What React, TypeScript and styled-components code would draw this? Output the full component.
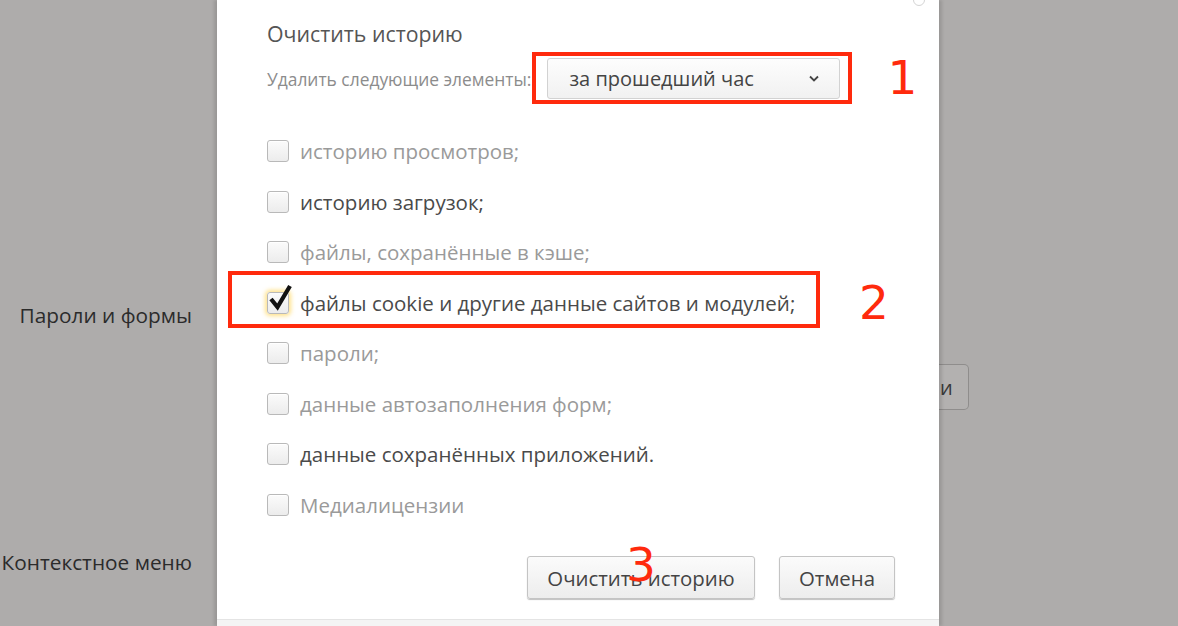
import React from 'react';
import styled, { createGlobalStyle } from 'styled-components';

const GlobalStyle = createGlobalStyle`
  html, body {
    margin: 0;
    padding: 0;
    background: #aeacab;
  }
  * {
    box-sizing: border-box;
  }
`;

const Page = styled.div`
  display: flex;
  width: 1178px;
  height: 626px;
  overflow: hidden;
  background: #aeacab;
  font-family: 'Open Sans', 'Noto Sans', sans-serif;
`;

const SideColumn = styled.div`
  width: 217px;
  flex-shrink: 0;
  display: flex;
  flex-direction: column;
  align-items: flex-end;
  padding: 301px 25px 0 0;
  gap: 219px;
`;

const SideLabel = styled.div`
  font-size: 20.8px;
  line-height: 28px;
  color: #2b2b2b;
  white-space: nowrap;
`;

const RightColumn = styled.div`
  flex: 1;
  padding-top: 364px;
`;

const GhostButton = styled.div`
  width: 30px;
  height: 46px;
  border: 1px solid #8f8d8c;
  border-left: none;
  border-radius: 0 5px 5px 0;
  background: #b3b1b0;
  display: flex;
  align-items: center;
  font-size: 20px;
  color: #3a3a3a;
  padding-left: 1px;
`;

const Dialog = styled.div`
  position: relative;
  width: 722px;
  flex-shrink: 0;
  display: flex;
  flex-direction: column;
  background: #fff;
  box-shadow: -3px 0 3px rgba(0, 0, 0, 0.12), 3px 0 3px rgba(0, 0, 0, 0.12);
`;

const CloseIcon = styled.div`
  position: absolute;
  top: -6px;
  right: 14px;
  width: 12px;
  height: 12px;
  border-radius: 50%;
  border: 1.5px solid #d4d4d4;
`;

const Body = styled.div`
  flex: 1;
  padding: 20px 44px 0 50px;
  display: flex;
  flex-direction: column;
`;

const Title = styled.h1`
  margin: 0;
  font-size: 21.3px;
  line-height: 28px;
  font-weight: 400;
  color: #555;
`;

const SelectRow = styled.div`
  display: flex;
  align-items: center;
  margin-top: 10px;
`;

const SelectLabel = styled.span`
  font-size: 17.4px;
  color: #8c8c8c;
  white-space: nowrap;
`;

const SelectBox = styled.div`
  position: relative;
  margin-left: 16px;
  width: 293px;
  height: 41px;
  display: flex;
  align-items: center;
  justify-content: space-between;
  padding: 0 20px 0 21px;
  border: 1px solid #d2d2d2;
  border-radius: 3px;
  background: linear-gradient(#fdfdfd, #f1f1f1);
  font-size: 20px;
  color: #444;
`;

const Annotation = styled.div<{ $top: number; $left: number; $w: number; $h: number }>`
  position: absolute;
  top: ${({ $top }) => $top}px;
  left: ${({ $left }) => $left}px;
  width: ${({ $w }) => $w}px;
  height: ${({ $h }) => $h}px;
  border: 4px solid #ff2a0d;
  pointer-events: none;
`;

const Marker = styled.span<{ $top: number; $left: number }>`
  position: absolute;
  top: ${({ $top }) => $top}px;
  left: ${({ $left }) => $left}px;
  font-family: 'DejaVu Sans', sans-serif;
  font-size: 47px;
  line-height: 1;
  color: #ff2a0d;
  pointer-events: none;
`;

const List = styled.div`
  margin-top: 27px;
  display: flex;
  flex-direction: column;
`;

const Row = styled.label<{ $dark?: boolean }>`
  position: relative;
  height: 50.5px;
  display: flex;
  align-items: center;
  gap: 11px;
  font-size: 20.5px;
  color: ${({ $dark }) => ($dark ? '#4a4a4a' : '#9a9a9a')};
  white-space: nowrap;
`;

const Box = styled.span<{ $checked?: boolean }>`
  position: relative;
  width: 22px;
  height: 22px;
  flex-shrink: 0;
  border: 1px solid #b9b9b9;
  border-radius: 3px;
  background: linear-gradient(#fbfbfb, #ececec);
  box-shadow: ${({ $checked }) =>
    $checked ? '0 0 4px 2px rgba(255, 214, 90, 0.7)' : 'inset 0 1px 0 #fff'};
`;

const Tick = styled.svg`
  position: absolute;
  left: 0;
  top: -9px;
`;

const Buttons = styled.div`
  position: relative;
  margin-top: 26px;
  display: flex;
  justify-content: flex-end;
  gap: 24px;
`;

const Button = styled.button<{ $w: number }>`
  width: ${({ $w }) => $w}px;
  height: 43px;
  border: 1px solid #c4c4c4;
  border-radius: 3px;
  background: linear-gradient(#fbfbfb, #ededed);
  box-shadow: 0 1px 1px rgba(0, 0, 0, 0.25);
  font-family: inherit;
  font-size: 20.4px;
  color: #444;
`;

const Footer = styled.div`
  height: 7px;
  border-top: 1px solid #e4e4e4;
  background: #f4f4f4;
`;

const items = [
  { text: 'историю просмотров;' },
  { text: 'историю загрузок;', dark: true },
  { text: 'файлы, сохранённые в кэше;' },
  { text: 'файлы cookie и другие данные сайтов и модулей;', dark: true, checked: true },
  { text: 'пароли;' },
  { text: 'данные автозаполнения форм;' },
  { text: 'данные сохранённых приложений.', dark: true },
  { text: 'Медиалицензии' },
];

const Chevron = () => (
  <svg width="10" height="7" viewBox="0 0 10 7">
    <path d="M1 1.5 L5 5.5 L9 1.5" fill="none" stroke="#444" strokeWidth="1.8" />
  </svg>
);

export default function App() {
  return (
    <>
      <GlobalStyle />
      <Page>
        <SideColumn>
          <SideLabel>Пароли и формы</SideLabel>
          <SideLabel>Контекстное меню</SideLabel>
        </SideColumn>
        <Dialog>
          <CloseIcon />
          <Body>
            <Title>Очистить историю</Title>
            <SelectRow>
              <SelectLabel>Удалить следующие элементы:</SelectLabel>
              <SelectBox>
                за прошедший час
                <Chevron />
                <Annotation $top={-7} $left={-16} $w={320} $h={52} />
                <Marker $top={-5} $left={339}>1</Marker>
              </SelectBox>
            </SelectRow>
            <List>
              {items.map((it) => (
                <Row key={it.text} $dark={it.dark}>
                  <Box $checked={it.checked}>
                    {it.checked && (
                      <Tick width="26" height="28" viewBox="0 0 26 28">
                        <path d="M3 15 L9.5 23 L22 2" fill="none" stroke="#111" strokeWidth="4.2" />
                      </Tick>
                    )}
                  </Box>
                  {it.text}
                  {it.checked && (
                    <>
                      <Annotation $top={-7} $left={-39} $w={592} $h={57} />
                      <Marker $top={1} $left={592}>2</Marker>
                    </>
                  )}
                </Row>
              ))}
            </List>
            <Buttons>
              <Button $w={228}>Очистить историю</Button>
              <Button $w={116}>Отмена</Button>
              <Marker $top={-15} $left={359}>3</Marker>
            </Buttons>
          </Body>
          <Footer />
        </Dialog>
        <RightColumn>
          <GhostButton>и</GhostButton>
        </RightColumn>
      </Page>
    </>
  );
}
